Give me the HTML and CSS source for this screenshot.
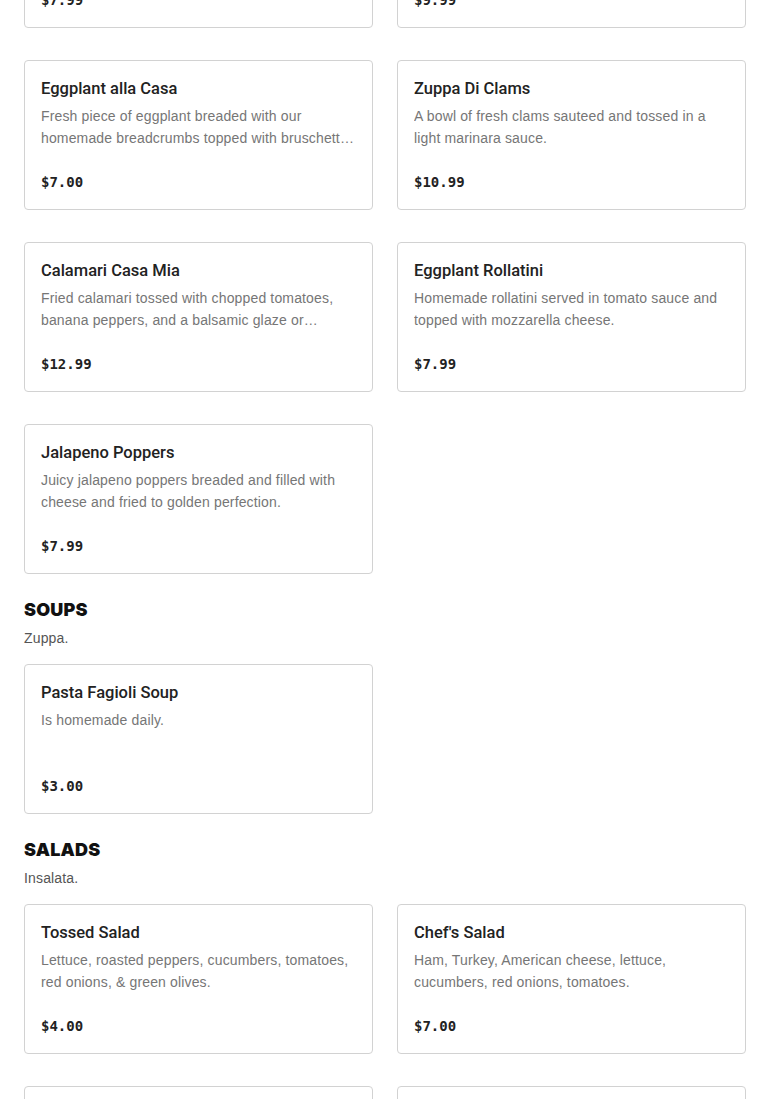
FILE: index.html
```html
<!DOCTYPE html>
<html lang="en">
<head>
<meta charset="utf-8">
<title>Menu</title>
<link rel="stylesheet" href="styles.css">
</head>
<body>
<main class="menu">
  <section class="section">
    <div class="grid">
      <article class="card">
        <h3 class="card-title">Mozzarella Sticks</h3>
        <p class="card-desc">Golden fried mozzarella sticks served with marinara sauce.</p>
        <div class="card-price">$7.99</div>
      </article>
      <article class="card">
        <h3 class="card-title">Stuffed Mushrooms</h3>
        <p class="card-desc">Mushrooms stuffed with our homemade seafood stuffing.</p>
        <div class="card-price">$9.99</div>
      </article>
      <article class="card">
        <h3 class="card-title">Eggplant alla Casa</h3>
        <p class="card-desc">Fresh piece of eggplant breaded with our homemade breadcrumbs topped with bruschetta, fresh mozzarella and a balsamic glaze.</p>
        <div class="card-price">$7.00</div>
      </article>
      <article class="card">
        <h3 class="card-title">Zuppa Di Clams</h3>
        <p class="card-desc">A bowl of fresh clams sauteed and tossed in a light marinara sauce.</p>
        <div class="card-price">$10.99</div>
      </article>
      <article class="card">
        <h3 class="card-title">Calamari Casa Mia</h3>
        <p class="card-desc">Fried calamari tossed with chopped tomatoes, banana peppers, and a balsamic glaze or marinara sauce on the side.</p>
        <div class="card-price">$12.99</div>
      </article>
      <article class="card">
        <h3 class="card-title">Eggplant Rollatini</h3>
        <p class="card-desc">Homemade rollatini served in tomato sauce and topped with mozzarella cheese.</p>
        <div class="card-price">$7.99</div>
      </article>
      <article class="card">
        <h3 class="card-title">Jalapeno Poppers</h3>
        <p class="card-desc">Juicy jalapeno poppers breaded and filled with cheese and fried to golden perfection.</p>
        <div class="card-price">$7.99</div>
      </article>
    </div>
  </section>

  <section class="section">
    <header class="section-head">
      <h2 class="section-title">SOUPS</h2>
      <p class="section-sub">Zuppa.</p>
    </header>
    <div class="grid">
      <article class="card">
        <h3 class="card-title">Pasta Fagioli Soup</h3>
        <p class="card-desc">Is homemade daily.</p>
        <div class="card-price">$3.00</div>
      </article>
    </div>
  </section>

  <section class="section">
    <header class="section-head">
      <h2 class="section-title">SALADS</h2>
      <p class="section-sub">Insalata.</p>
    </header>
    <div class="grid">
      <article class="card">
        <h3 class="card-title">Tossed Salad</h3>
        <p class="card-desc">Lettuce, roasted peppers, cucumbers, tomatoes, red onions, &amp; green olives.</p>
        <div class="card-price">$4.00</div>
      </article>
      <article class="card">
        <h3 class="card-title">Chef's Salad</h3>
        <p class="card-desc">Ham, Turkey, American cheese, lettuce, cucumbers, red onions, tomatoes.</p>
        <div class="card-price">$7.00</div>
      </article>
      <article class="card">
        <h3 class="card-title">Antipasto Salad</h3>
        <p class="card-desc">Ham, salami, provolone, lettuce, tomatoes, olives and peppers.</p>
        <div class="card-price">$9.00</div>
      </article>
      <article class="card">
        <h3 class="card-title">Caesar Salad</h3>
        <p class="card-desc">Romaine lettuce, croutons and parmesan cheese with caesar dressing.</p>
        <div class="card-price">$6.00</div>
      </article>
    </div>
  </section>
</main>
</body>
</html>
```

FILE: styles.css
```css
html, body {
  margin: 0;
  padding: 0;
  background: #ffffff;
}

body {
  font-family: "Liberation Sans", Arial, sans-serif;
  color: #222222;
  overflow: hidden;
}

.menu {
  padding: 0 24px;
  margin-top: -122px;
}

.section {
  margin-bottom: 24px;
}

.section-head {
  margin-bottom: 15px;
}

.section-title {
  margin: 0;
  font-family: "Inter", "Liberation Sans", sans-serif;
  font-weight: 900;
  font-size: 18px;
  line-height: 24px;
  letter-spacing: 0.2px;
  color: #111111;
}

.section-sub {
  margin: 5px 0 0;
  font-size: 14px;
  line-height: 22px;
  letter-spacing: 0.15px;
  color: #555555;
}

.grid {
  display: grid;
  grid-template-columns: 1fr 1fr;
  column-gap: 24px;
  row-gap: 32px;
}

.card {
  box-sizing: border-box;
  height: 150px;
  border: 1px solid #d2d2d2;
  border-radius: 4px;
  padding: 16px;
  display: flex;
  flex-direction: column;
}

.card-title {
  margin: 0;
  font-family: "Roboto", "Liberation Sans", sans-serif;
  font-size: 16.5px;
  line-height: 24px;
  font-weight: 500;
  color: #222222;
}

.card-desc {
  margin: 4px 0 0;
  font-size: 14px;
  line-height: 22px;
  letter-spacing: 0.15px;
  color: #767676;
  height: 44px;
  overflow: hidden;
  display: -webkit-box;
  -webkit-line-clamp: 2;
  -webkit-box-orient: vertical;
}

.card-price {
  margin-top: auto;
  font-family: "DejaVu Sans Mono", "Liberation Mono", monospace;
  font-weight: 700;
  font-size: 14px;
  line-height: 22px;
  color: #222222;
}
```
